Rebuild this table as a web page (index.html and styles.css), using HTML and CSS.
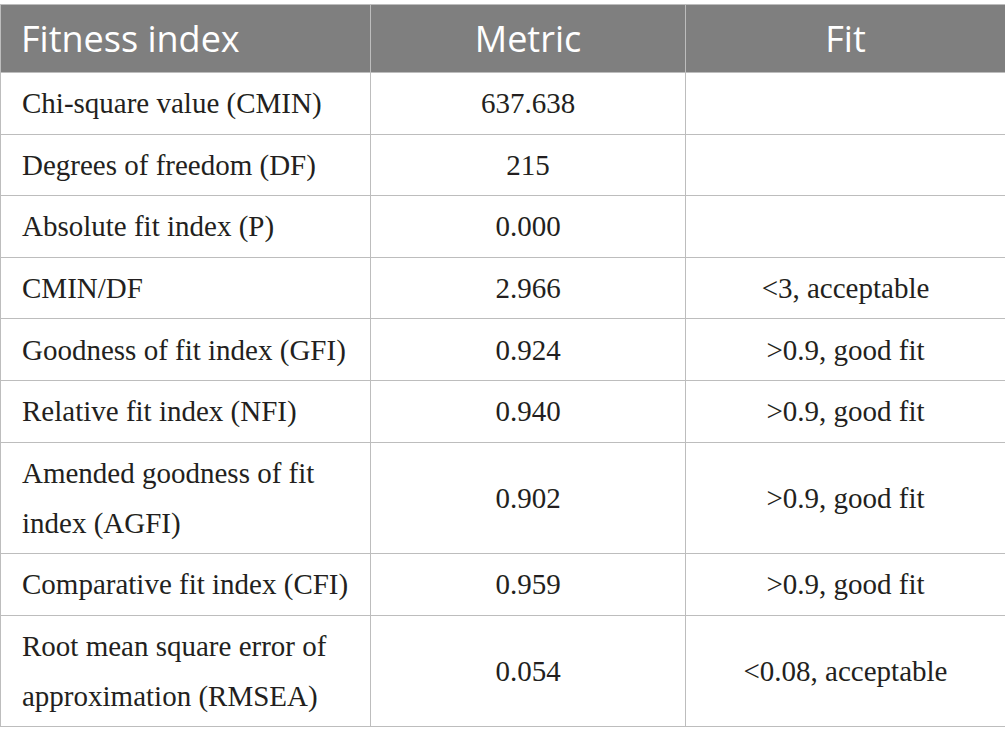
FILE: index.html
```html
<!DOCTYPE html>
<html>
<head>
<meta charset="utf-8">
<link rel="stylesheet" href="styles.css">
</head>
<body>
<table class="fit-table">
  <colgroup>
    <col class="c1">
    <col class="c2">
    <col class="c3">
  </colgroup>
  <thead>
    <tr>
      <th class="left">Fitness index</th>
      <th>Metric</th>
      <th>Fit</th>
    </tr>
  </thead>
  <tbody>
    <tr><td class="left">Chi-square value (CMIN)</td><td>637.638</td><td></td></tr>
    <tr><td class="left">Degrees of freedom (DF)</td><td>215</td><td></td></tr>
    <tr><td class="left">Absolute fit index (P)</td><td>0.000</td><td></td></tr>
    <tr><td class="left">CMIN/DF</td><td>2.966</td><td>&lt;3, acceptable</td></tr>
    <tr><td class="left">Goodness of fit index (GFI)</td><td>0.924</td><td>&gt;0.9, good fit</td></tr>
    <tr><td class="left">Relative fit index (NFI)</td><td>0.940</td><td>&gt;0.9, good fit</td></tr>
    <tr><td class="left">Amended goodness of fit<br>index (AGFI)</td><td>0.902</td><td>&gt;0.9, good fit</td></tr>
    <tr><td class="left">Comparative fit index (CFI)</td><td>0.959</td><td>&gt;0.9, good fit</td></tr>
    <tr><td class="left">Root mean square error of<br>approximation (RMSEA)</td><td>0.054</td><td>&lt;0.08, acceptable</td></tr>
  </tbody>
</table>
</body>
</html>
```

FILE: styles.css
```css
html, body {
  margin: 0;
  padding: 0;
  background: #ffffff;
}

.fit-table {
  margin-top: 4px;
  width: 1005px;
  border-collapse: collapse;
  table-layout: fixed;
}

.c1 { width: 370px; }
.c2 { width: 315px; }
.c3 { width: 320px; }

.fit-table th,
.fit-table td {
  border: 1px solid #bdbdbd;
  text-align: center;
  vertical-align: middle;
}

.fit-table th {
  background: #7f7f7f;
  color: #ffffff;
  font-family: "Open Sans", "Noto Sans", sans-serif;
  font-weight: 400;
  font-size: 36px;
  line-height: 67px;
  height: 67px;
  padding: 0 20px;
}

.fit-table td {
  color: #231f20;
  font-family: "Liberation Serif", "Times New Roman", serif;
  font-size: 29px;
  line-height: 50px;
  padding: 5.3px 21px 5.3px 21px;
}

.fit-table .left {
  text-align: left;
}
```
